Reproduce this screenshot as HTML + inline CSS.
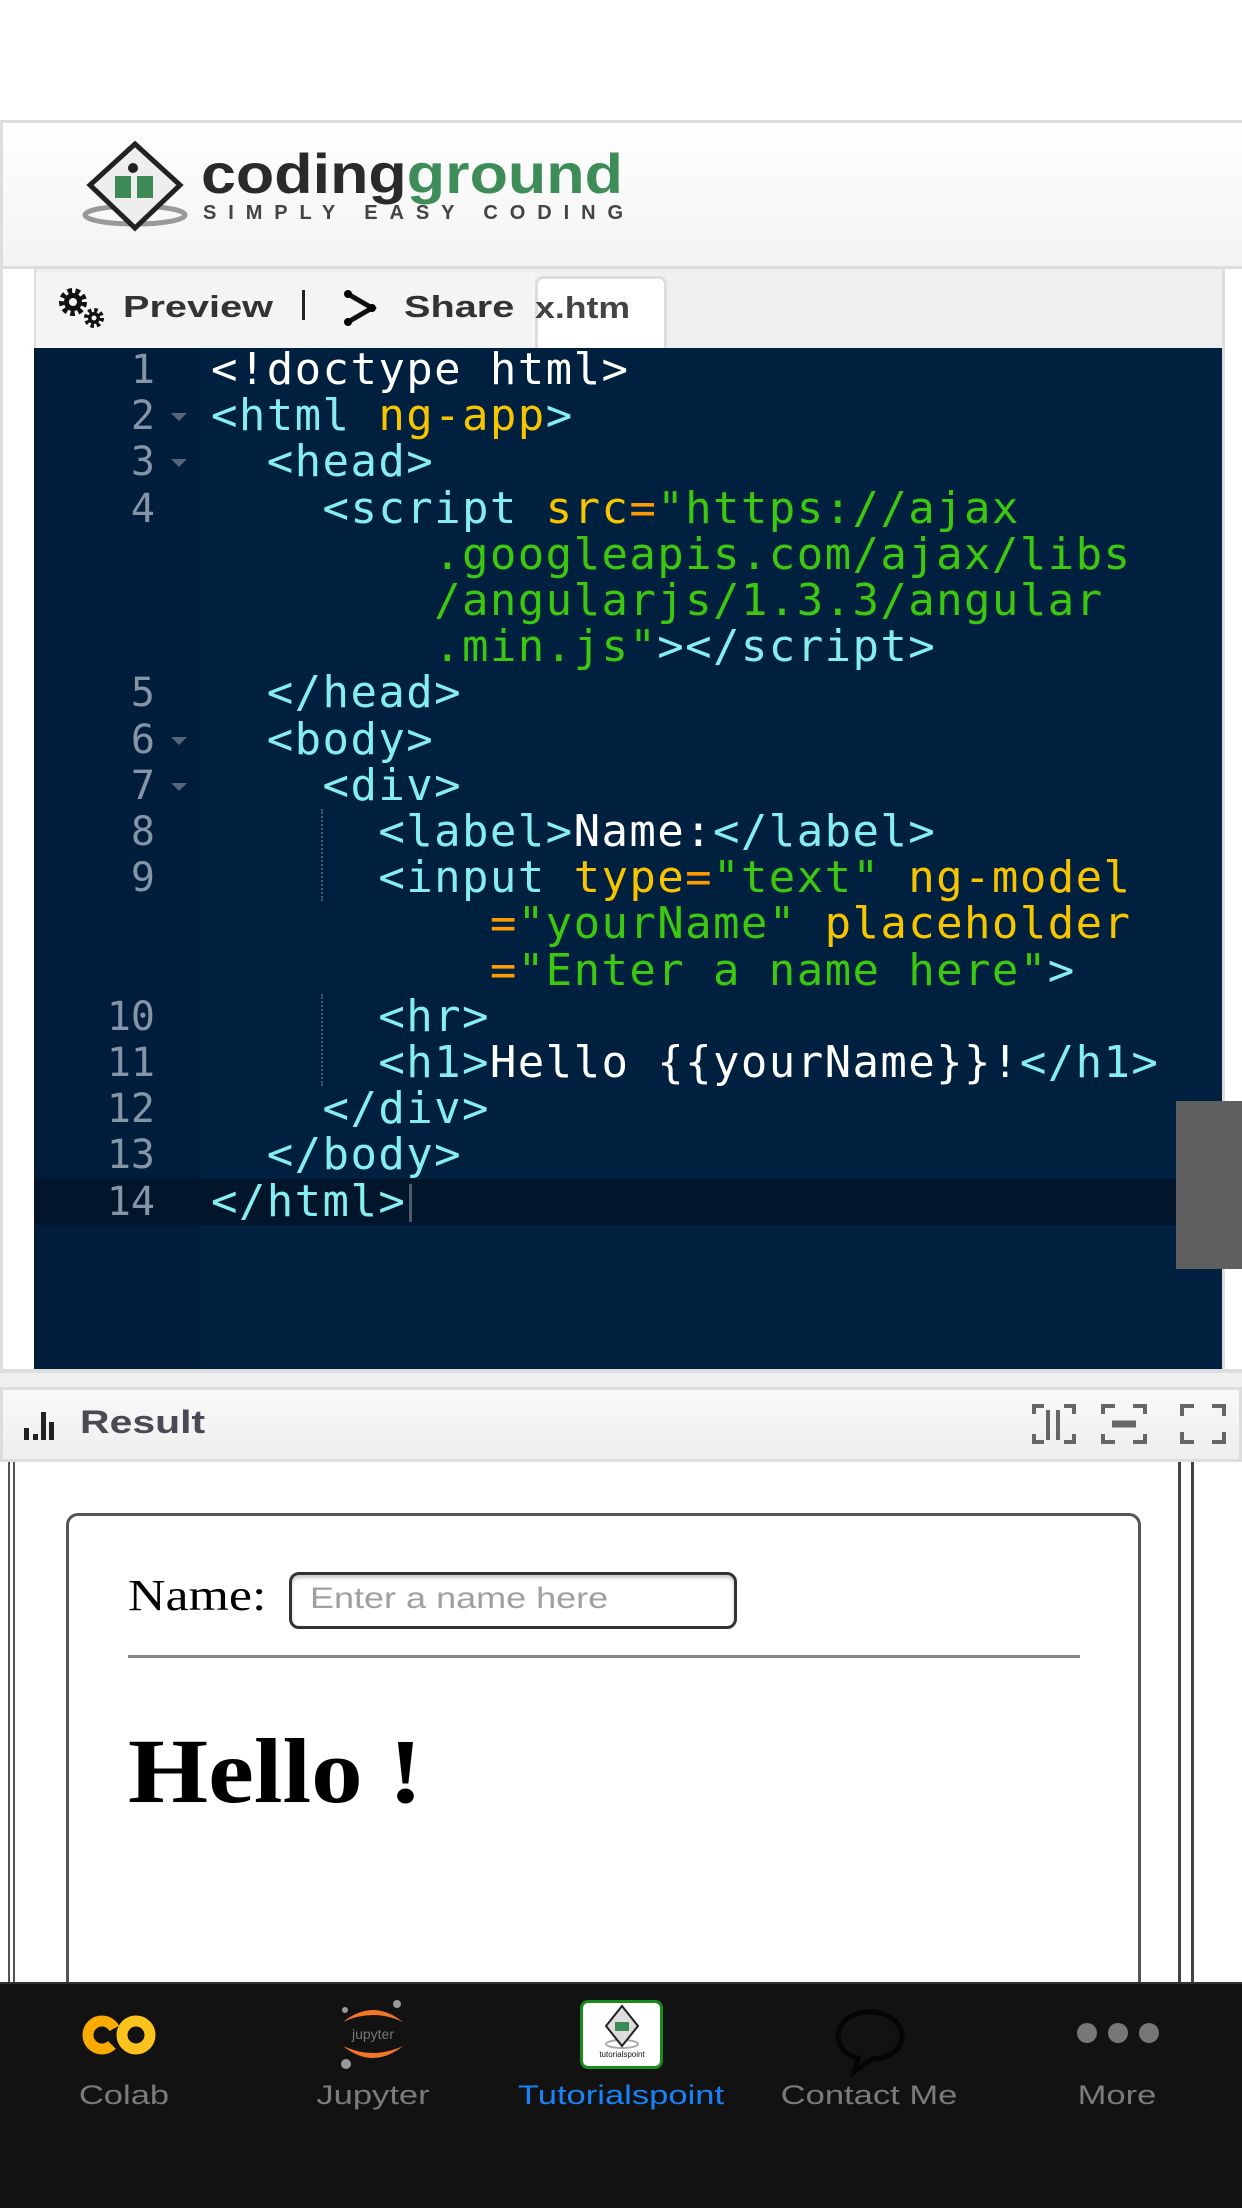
<!DOCTYPE html>
<html><head><meta charset="utf-8">
<style>
*{margin:0;padding:0;box-sizing:border-box}
body{width:1242px;height:2208px;position:relative;background:#fff;overflow:hidden;font-family:"Liberation Sans",sans-serif}
.abs{position:absolute}
.code{position:absolute;left:211px;font-family:"DejaVu Sans Mono","Liberation Mono",monospace;font-size:44px;letter-spacing:1.4px;white-space:pre;color:#fff;height:46.2px;line-height:46.2px}
.ln{position:absolute;left:34px;width:121px;text-align:right;font-family:"DejaVu Sans Mono",monospace;font-size:40px;color:#8595a8;line-height:46.2px;height:46.2px}
.fold{position:absolute;left:171px;width:0;height:0;border-left:8px solid transparent;border-right:8px solid transparent;border-top:8px solid #56657a}
.t{color:#86eef0}.a{color:#f7c500}.e{color:#ff9a00}.s{color:#3cc810}
.lbl{position:absolute;top:2080px;font-size:27px;color:#7b7b7b;text-align:center;width:248px;transform:scaleX(1.28)}
.sx{transform:scaleX(1.28);transform-origin:left}
</style></head><body>
<!-- header -->
<div class="abs" style="left:0;top:120px;width:1242px;height:149px;border-top:3px solid #ddd;border-bottom:3px solid #ddd;border-left:3px solid #ddd;background:linear-gradient(#fff,#f3f3f3)"></div>
<svg class="abs" style="left:75px;top:138px" width="560" height="100" viewBox="0 0 560 100">
 <ellipse cx="60" cy="77" rx="50" ry="9" fill="none" stroke="#999" stroke-width="5"/>
 <polygon points="60,6 105,47 60,90 15,47" fill="#eee" stroke="#222" stroke-width="5"/>
 <path d="M40 38 h16 v22 h-16z M62 38 h16 v22 h-16z" fill="#3d8a55"/>
 <circle cx="58" cy="30" r="5" fill="#222"/>
 <text x="126" y="55" font-family="Liberation Sans" font-weight="bold" font-size="56" textLength="422" lengthAdjust="spacingAndGlyphs" fill="#2a2a2a">coding<tspan fill="#3e8c58">ground</tspan></text>
 <text x="128" y="81" font-family="Liberation Sans" font-weight="bold" font-size="20" textLength="420" lengthAdjust="spacing" fill="#444">SIMPLY EASY CODING</text>
</svg>
<!-- tab bar -->
<div class="abs" style="left:34px;top:269px;width:1188px;height:80px;background:#efefef;border-left:3px solid #ddd"></div>
<div class="abs" style="left:535px;top:276px;width:132px;height:73px;background:#fff;border:3px solid #ddd;border-bottom:none;border-radius:8px 8px 0 0"></div>
<div class="abs" style="left:535px;top:290px;font-size:31px;font-weight:bold;color:#444;transform:scaleX(1.15);transform-origin:left">x.htm</div>
<div class="abs" style="left:36px;top:272px;width:499px;height:76px;background:#f4f4f4"></div>
<svg class="abs" style="left:56px;top:285px" width="54" height="46" viewBox="0 0 54 46">
 <circle cx="17" cy="17" r="10" fill="none" stroke="#111" stroke-width="8" stroke-dasharray="4 3"/><circle cx="17" cy="17" r="9" fill="#111"/><circle cx="17" cy="17" r="4" fill="#f4f4f4"/>
 <circle cx="38" cy="33" r="7" fill="none" stroke="#111" stroke-width="6" stroke-dasharray="3 2.5"/><circle cx="38" cy="33" r="6" fill="#111"/><circle cx="38" cy="33" r="2.5" fill="#f4f4f4"/>
</svg>
<div class="abs sx" style="left:123px;top:289px;font-size:31px;font-weight:bold;color:#333">Preview</div>
<div class="abs" style="left:302px;top:290px;width:3px;height:30px;background:#222"></div>
<svg class="abs" style="left:340px;top:288px" width="40" height="40" viewBox="0 0 40 40"><path d="M8 6 L32 20 L8 34" fill="none" stroke="#111" stroke-width="5"/><circle cx="8" cy="6" r="4"/><circle cx="32" cy="20" r="4"/><circle cx="8" cy="34" r="4"/></svg>
<div class="abs sx" style="left:404px;top:289px;font-size:31px;font-weight:bold;color:#333">Share</div>
<!-- editor -->
<div class="abs" style="left:0;top:269px;width:34px;height:1102px;background:#fff;border-left:3px solid #ddd"></div>
<div class="abs" style="left:34px;top:348px;width:1188px;height:1022px;background:#00203f"></div>
<div class="abs" style="left:34px;top:348px;width:166px;height:1022px;background:#001e3b"></div>
<div class="abs" style="left:34px;top:1179px;width:1142px;height:46px;background:#01162b"></div>
<div class="abs" style="left:1222px;top:269px;width:20px;height:1102px;background:#fff;border-left:3px solid #ddd"></div>
<div class="abs" style="left:0;top:1369px;width:1242px;height:4px;background:#ddd"></div>
<div class="abs" style="left:1176px;top:1101px;width:66px;height:168px;background:#5f5f5f"></div>
<div class="abs" style="left:321px;top:809px;height:92px;border-left:2px dotted #4a5a70"></div>
<div class="abs" style="left:321px;top:994px;height:92px;border-left:2px dotted #4a5a70"></div>
<div class="abs" style="left:409px;top:1184px;width:3px;height:38px;background:#4a5a6a"></div>

<div class="ln" style="top:347px">1</div>
<div class="ln" style="top:393px">2</div><div class="fold" style="top:413px"></div>
<div class="ln" style="top:439px">3</div><div class="fold" style="top:459px"></div>
<div class="ln" style="top:486px">4</div>
<div class="ln" style="top:670px">5</div>
<div class="ln" style="top:717px">6</div><div class="fold" style="top:737px"></div>
<div class="ln" style="top:763px">7</div><div class="fold" style="top:783px"></div>
<div class="ln" style="top:809px">8</div>
<div class="ln" style="top:855px">9</div>
<div class="ln" style="top:994px">10</div>
<div class="ln" style="top:1040px">11</div>
<div class="ln" style="top:1086px">12</div>
<div class="ln" style="top:1132px">13</div>
<div class="ln" style="top:1179px">14</div>

<div class="code" style="top:347px">&lt;!doctype html&gt;</div>
<div class="code" style="top:393px"><span class="t">&lt;html</span><span class="a"> ng-app</span><span class="t">&gt;</span></div>
<div class="code" style="top:439px"><span class="t">  &lt;head&gt;</span></div>
<div class="code" style="top:486px"><span class="t">    &lt;script</span><span class="a"> src</span><span class="e">=</span><span class="s">"https://ajax</span></div>
<div class="code" style="top:532px"><span class="s">        .googleapis.com/ajax/libs</span></div>
<div class="code" style="top:578px"><span class="s">        /angularjs/1.3.3/angular</span></div>
<div class="code" style="top:624px"><span class="s">        .min.js"</span><span class="t">&gt;&lt;/script&gt;</span></div>
<div class="code" style="top:670px"><span class="t">  &lt;/head&gt;</span></div>
<div class="code" style="top:717px"><span class="t">  &lt;body&gt;</span></div>
<div class="code" style="top:763px"><span class="t">    &lt;div&gt;</span></div>
<div class="code" style="top:809px"><span class="t">      &lt;label&gt;</span>Name:<span class="t">&lt;/label&gt;</span></div>
<div class="code" style="top:855px"><span class="t">      &lt;input</span><span class="a"> type</span><span class="e">=</span><span class="s">"text"</span><span class="a"> ng-model</span></div>
<div class="code" style="top:901px"><span class="e">          =</span><span class="s">"yourName"</span><span class="a"> placeholder</span></div>
<div class="code" style="top:948px"><span class="e">          =</span><span class="s">"Enter a name here"</span><span class="t">&gt;</span></div>
<div class="code" style="top:994px"><span class="t">      &lt;hr&gt;</span></div>
<div class="code" style="top:1040px"><span class="t">      &lt;h1&gt;</span>Hello {{yourName}}!<span class="t">&lt;/h1&gt;</span></div>
<div class="code" style="top:1086px"><span class="t">    &lt;/div&gt;</span></div>
<div class="code" style="top:1132px"><span class="t">  &lt;/body&gt;</span></div>
<div class="code" style="top:1179px"><span class="t">&lt;/html&gt;</span></div>

<!-- result -->
<div class="abs" style="left:0;top:1373px;width:1242px;height:14px;background:#efefef"></div>
<div class="abs" style="left:0;top:1387px;width:1242px;height:75px;background:linear-gradient(#f9f9f9,#eee);border:3px solid #ddd"></div>
<svg class="abs" style="left:22px;top:1408px" width="50" height="34" viewBox="0 0 50 34"><rect x="2" y="20" width="5" height="12" fill="#222"/><rect x="11" y="26" width="5" height="6" fill="#222"/><rect x="19" y="4" width="5" height="28" fill="#222"/><rect x="27" y="14" width="5" height="18" fill="#222"/></svg>
<div class="abs sx" style="left:80px;top:1404px;font-size:32px;font-weight:bold;color:#4a4a55">Result</div>
<svg class="abs" style="left:1030px;top:1402px" width="210" height="46" viewBox="0 0 210 46" fill="none" stroke="#666" stroke-width="4">
 <path d="M4 12V4h10M4 32v8h10M34 4h10v8M34 40h10v-8M18 8v30M28 8v30"/>
 <path d="M73 12V4h12M73 32v8h12M103 4h12v8M103 40h12v-8"/><path d="M82 22h24" stroke-width="7"/>
 <path d="M152 14V4h12M152 30v10h12M182 4h12v10M182 40h12V30"/>
</svg>
<div class="abs" style="left:0;top:1462px;width:1242px;height:520px;background:#fff"></div>
<div class="abs" style="left:8px;top:1462px;width:7px;height:520px;border-left:2px solid #555;border-right:2px solid #555"></div>
<div class="abs" style="left:1178px;top:1462px;width:16px;height:520px;border-left:3px solid #444;border-right:3px solid #444"></div>
<div class="abs" style="left:66px;top:1513px;width:1075px;height:520px;border:3px solid #555;border-radius:12px"></div>
<div class="abs" style="left:128px;top:1570px;font-family:'Liberation Serif',serif;font-size:44px;color:#000;transform:scaleX(1.18);transform-origin:left">Name:</div>
<div class="abs" style="left:289px;top:1572px;width:448px;height:57px;border:3px solid #333;border-radius:10px;box-shadow:inset 0 3px 3px #ccc"></div>
<div class="abs" style="left:310px;top:1582px;font-size:30px;color:#a0a0a0;transform:scaleX(1.2);transform-origin:left">Enter a name here</div>
<div class="abs" style="left:128px;top:1655px;width:952px;height:3px;background:#888"></div>
<div class="abs" style="left:128px;top:1718px;font-family:'Liberation Serif',serif;font-weight:bold;font-size:92px;color:#000;transform:scaleX(1.12);transform-origin:left">Hello !</div>
<!-- bottom tab bar -->
<div class="abs" style="left:0;top:1982px;width:1242px;height:226px;background:#121212;border-top:2px solid #333"></div>
<svg class="abs" style="left:80px;top:2010px" width="90" height="50" viewBox="0 0 90 50"><circle cx="22" cy="25" r="14" fill="none" stroke="#f9ab00" stroke-width="11" stroke-dasharray="70 18" transform="rotate(45 22 25)"/><circle cx="56" cy="25" r="14" fill="none" stroke="#fcc31f" stroke-width="11"/></svg>
<svg class="abs" style="left:335px;top:1998px" width="76" height="74" viewBox="0 0 76 74"><path d="M8 24 Q38 0 68 24 Q38 10 8 24Z" fill="#f37726"/><path d="M8 48 Q38 72 68 48 Q38 62 8 48Z" fill="#f37726"/><circle cx="62" cy="6" r="4" fill="#999"/><circle cx="10" cy="12" r="3" fill="#999"/><circle cx="11" cy="66" r="5" fill="#999"/><text x="38" y="41" font-size="14" text-anchor="middle" fill="#777" font-family="Liberation Sans">jupyter</text></svg>
<div class="abs" style="left:580px;top:2000px;width:83px;height:69px;background:#fff;border:3px solid #1a8a1a;border-radius:8px"></div>
<svg class="abs" style="left:593px;top:2004px" width="58" height="60" viewBox="0 0 58 60"><ellipse cx="29" cy="40" rx="16" ry="4" fill="none" stroke="#aaa" stroke-width="2"/><polygon points="29,2 45,22 29,42 13,22" fill="#ddd" stroke="#222" stroke-width="2"/><rect x="22" y="18" width="14" height="9" fill="#3d8a55"/><text x="29" y="53" font-size="8" text-anchor="middle" font-family="Liberation Sans" fill="#111">tutorialspoint</text></svg>
<svg class="abs" style="left:832px;top:2006px" width="76" height="72" viewBox="0 0 76 72"><path d="M38 6 C18 6 6 18 6 30 C6 42 16 50 26 52 L22 66 L40 53 C60 52 70 42 70 30 C70 18 58 6 38 6Z" fill="none" stroke="#050505" stroke-width="5"/></svg>
<svg class="abs" style="left:1075px;top:2018px" width="86" height="30" viewBox="0 0 86 30"><circle cx="12" cy="15" r="10" fill="#777"/><circle cx="43" cy="15" r="10" fill="#777"/><circle cx="74" cy="15" r="10" fill="#777"/></svg>
<div class="lbl" style="left:0">Colab</div>
<div class="lbl" style="left:249px">Jupyter</div>
<div class="lbl" style="left:497px;color:#1a82f7">Tutorialspoint</div>
<div class="lbl" style="left:745px">Contact Me</div>
<div class="lbl" style="left:993px">More</div>
</body></html>
